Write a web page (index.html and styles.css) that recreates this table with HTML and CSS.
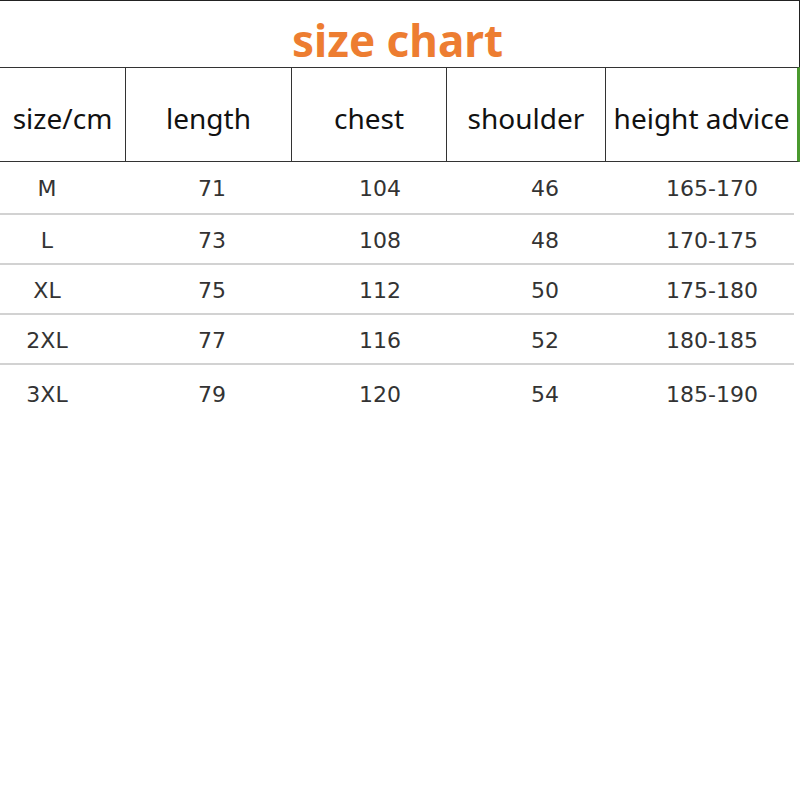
FILE: index.html
```html
<!DOCTYPE html>
<html>
<head>
<meta charset="utf-8">
<link rel="stylesheet" href="styles.css">
</head>
<body>
<div class="chart">
  <div class="title-row"><h1 class="title">size chart</h1></div>
  <div class="head-row">
    <div class="hcell">size/cm</div>
    <div class="hcell">length</div>
    <div class="hcell">chest</div>
    <div class="hcell">shoulder</div>
    <div class="hcell last">height advice</div>
  </div>
  <div class="body">
    <div class="row first"><span>M</span><span>71</span><span>104</span><span>46</span><span>165-170</span></div>
    <div class="row"><span>L</span><span>73</span><span>108</span><span>48</span><span>170-175</span></div>
    <div class="row"><span>XL</span><span>75</span><span>112</span><span>50</span><span>175-180</span></div>
    <div class="row"><span>2XL</span><span>77</span><span>116</span><span>52</span><span>180-185</span></div>
    <div class="row final"><span>3XL</span><span>79</span><span>120</span><span>54</span><span>185-190</span></div>
  </div>
</div>
</body>
</html>
```

FILE: styles.css
```css
html, body {
  margin: 0;
  padding: 0;
  background: #fff;
}

.chart {
  width: 800px;
}

.title-row {
  height: 66px;
  border-top: 1px solid #222;
  border-right: 1px solid #222;
  width: 799px;
  box-sizing: content-box;
  display: flex;
  justify-content: center;
}

.title {
  margin: 0;
  padding-top: 14px;
  padding-right: 4px;
  font-family: "Noto Sans", sans-serif;
  font-weight: 700;
  font-size: 44px;
  line-height: 50px;
  color: #ED7D31;
}

.head-row {
  display: grid;
  grid-template-columns: 126px 166px 155px 159px 191px;
  width: 797px;
  height: 93px;
  border-top: 1px solid #333;
  border-bottom: 1px solid #333;
  border-right: 3px solid #4a9a2e;
}

.hcell {
  border-right: 1px solid #333;
  display: flex;
  align-items: center;
  justify-content: center;
  padding-top: 6px;
  font-family: "Noto Sans", sans-serif;
  font-size: 28px;
  color: #111;
  white-space: nowrap;
}

.hcell.last {
  border-right: none;
}

.body {
  width: 794px;
}

.row {
  display: grid;
  grid-template-columns: 94px 236px 100px 230px 104px;
  height: 48px;
  border-bottom: 2px solid #d2d2d2;
  align-items: center;
  font-family: "DejaVu Sans", sans-serif;
  font-size: 22px;
  color: #333;
}

.row.first {
  height: 51px;
}

.row span {
  text-align: center;
  white-space: nowrap;
  padding-top: 2px;
}

.row.final {
  border-bottom: none;
  height: 56px;
}
```
